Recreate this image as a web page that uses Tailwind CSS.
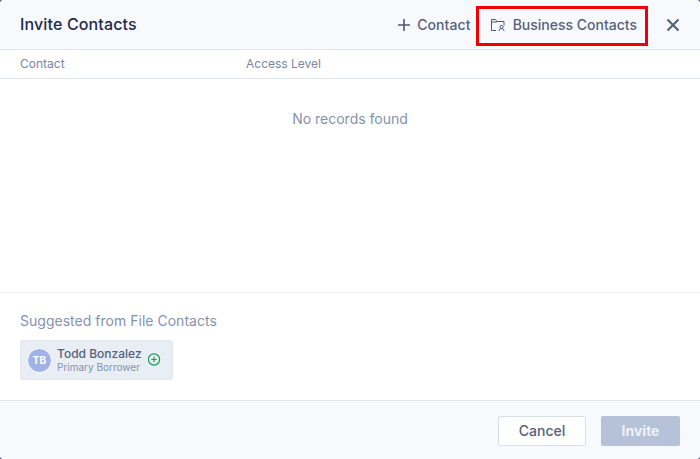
<!DOCTYPE html>
<html lang="en">
<head>
    <meta charset="UTF-8">
    <title>Invite Contacts</title>
    <script src="https://cdn.jsdelivr.net/npm/@tailwindcss/browser@4"></script>
</head>
<body class="bg-[#5b6478] overflow-hidden font-['Inter',sans-serif]">
    <div class="relative w-[700px] h-[459px] bg-white rounded-[4px] overflow-hidden flex flex-col">
        <!-- Header -->
        <header class="h-[50px] shrink-0 bg-[#f8f9fc] border-b border-[#e2e7ef] flex items-center pl-5 pr-5">
            <h1 class="text-[16px] font-medium tracking-[0.14px] text-[#1d2b4a] flex-1 -mt-[1px]">Invite Contacts</h1>
            <button class="flex items-center text-[14px] font-medium tracking-[0.1px] text-[#55617c]">
                <svg class="w-[14px] h-[14px] mr-[6px]" viewBox="0 0 14 14" fill="none" stroke="#4d5a75" stroke-width="1.6"><path d="M7 1v12M1 7h12"/></svg>
                Contact
            </button>
            <button class="flex items-center text-[14px] font-medium text-[#55617c] ml-[19px]">
                <svg class="w-[16px] h-[14px] mr-[7px]" viewBox="0 0 16 14" fill="none" stroke="#4d5a75" stroke-width="1"><path d="M6 12.500H1.500V1.500h4l1.500 2h7v4"/><path d="M1.500 4h5.500"/><circle cx="11.500" cy="9" r="1.600"/><path d="M9 13c0-1.500 1-2.400 2.500-2.400S14 11.500 14 13"/></svg>
                Business Contacts
            </button>
            <button class="ml-[29px]">
                <svg class="w-[14px] h-[14px] block" viewBox="0 0 14 14" fill="none" stroke="#55617c" stroke-width="2.200"><path d="M1.500 1.500l11 11M12.500 1.500l-11 11"/></svg>
            </button>
        </header>

        <!-- Table head -->
        <div class="h-[29px] shrink-0 border-b border-[#e2e7ef] flex items-center px-5 text-[12px] text-[#7a86a1]">
            <div class="w-[226px]">Contact</div>
            <div>Access Level</div>
        </div>

        <!-- Table body -->
        <main class="h-[214px] shrink-0 border-b border-[#edf0f5] pt-[29px] text-center text-[14px] text-[#8692ad]">
            No records found
        </main>

        <!-- Suggested -->
        <section class="flex-1 px-5 pt-[19px]">
            <p class="text-[14px] leading-[17px] tracking-[0.02px] text-[#8692ad] mb-[11px]">Suggested from File Contacts</p>
            <div class="w-[153px] h-[40px] bg-[#e9edf4] border border-[#e2e7ef] rounded-[3px] flex items-center pl-[6px]">
                <div class="w-[25px] h-[25px] rounded-full bg-[#a0b2e6] border border-white flex items-center justify-center text-[10px] font-bold text-white">TB</div>
                <div class="ml-[5px]">
                    <div class="text-[12px] leading-[15px] font-medium text-[#55617c]">Todd Bonzalez</div>
                    <div class="text-[10px] leading-[13px] text-[#8692ad]">Primary Borrower</div>
                </div>
                <svg class="w-[13px] h-[13px] ml-[6px] -mt-[1px]" viewBox="0 0 13 13" fill="none" stroke="#1a9a5c" stroke-width="1.200"><circle cx="6" cy="6.500" r="5.600"/><path d="M6 3.800v5.400M3.300 6.500h5.400"/></svg>
            </div>
        </section>

        <!-- Footer -->
        <footer class="h-[59px] shrink-0 bg-[#f8f9fc] border-t border-[#e2e7ef] flex items-center justify-end gap-[15px] pr-5 pt-[1px]">
            <button class="w-[88px] h-[30px] bg-white border border-[#d8dfeb] rounded-[2px] text-[14px] font-medium text-[#55617c]">Cancel</button>
            <button class="w-[79px] h-[30px] bg-[#b6c2d8] rounded-[2px] text-[14px] font-bold text-[#eef1f6]">Invite</button>
        </footer>

        <!-- Red annotation box -->
        <div class="absolute left-[476px] top-[6px] w-[172px] h-[40px] border-[3px] border-[#f00000]"></div>
    </div>
</body>
</html>
